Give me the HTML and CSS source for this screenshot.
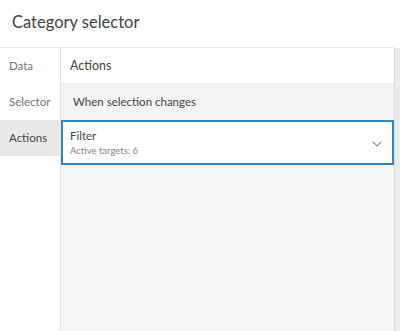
FILE: index.html
```html
<!DOCTYPE html>
<html lang="en">
<head>
    <meta charset="UTF-8">
    <meta name="viewport" content="width=device-width, initial-scale=1.0">
    <title>Category selector</title>
    <link rel="stylesheet" href="styles.css">
</head>
<body>
    <div class="panel">
        <div class="panel-header">Category selector</div>

        <div class="panel-body">
            <nav class="side-nav">
                <div class="nav-item">Data</div>
                <div class="nav-item">Selector</div>
                <div class="nav-item active">Actions</div>
            </nav>

            <div class="content">
                <div class="section-title">Actions</div>
                <div class="trigger-row">When selection changes</div>

                <div class="action-card">
                    <div class="action-text">
                        <div class="action-name">Filter</div>
                        <div class="action-meta">Active targets: 6</div>
                    </div>
                    <svg class="chevron" width="10" height="6" viewBox="0 0 10 6">
                        <path d="M1 1 L5 5 L9 1" fill="none" stroke="#8a8a8a" stroke-width="1.1"/>
                    </svg>
                </div>
            </div>

            <div class="scroll-track"></div>
        </div>
    </div>
</body>
</html>
```

FILE: styles.css
```css
body { margin: 0; font-family: Lato, "Open Sans", sans-serif; color: #323232; background: #fff; }
.panel { width: 400px; height: 331px; display: flex; flex-direction: column; overflow: hidden; }
.panel-header { height: 48px; box-sizing: border-box; padding: 12px 0 0 12px; font-size: 16.5px; color: #444; border-bottom: 1px solid #e6e6e6; margin-right: 6px; }
.panel-body { flex: 1; display: flex; }
.side-nav { width: 60px; border-right: 1px solid #e4e4e4; }
.nav-item { height: 36px; line-height: 36px; padding-left: 9px; font-size: 11.5px; color: #777; }
.nav-item.active { background: #e9e9e9; color: #444; }
.content { flex: 1; background: #f7f7f7; }
.section-title { height: 35px; line-height: 35px; padding-left: 9px; font-size: 12.5px; color: #444; background: #fff; border-bottom: 1px solid #ececec; }
.trigger-row { height: 36px; line-height: 36px; padding-left: 12px; font-size: 11.5px; color: #444; background: #f3f3f3; }
.action-card { height: 45px; box-sizing: border-box; border: 2px solid #2d86c2; background: #fff; display: flex; align-items: center; padding: 0 10px 0 7px; }
.action-text { flex: 1; }
.action-name { font-size: 11.5px; color: #444; line-height: 16px; }
.action-meta { font-size: 9.5px; color: #888; line-height: 14px; }
.chevron { margin-top: 2px; }
.scroll-track { width: 5px; background: #ebebeb; border-left: 1px solid #dcdcdc; }
```
